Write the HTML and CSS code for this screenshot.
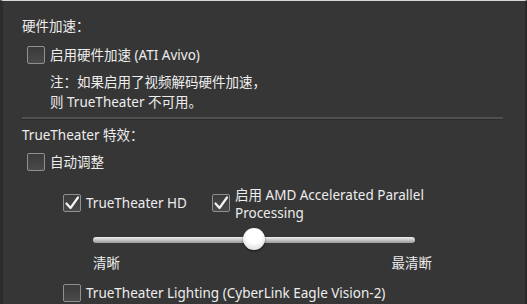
FILE: index.html
```html
<!DOCTYPE html>
<html>
<head>
<meta charset="utf-8">
<link rel="stylesheet" href="styles.css">
</head>
<body>
<div class="panel">
  <div class="title t1">硬件加速：</div>
  <div class="row r1"><span class="cb"></span><span class="lbl">启用硬件加速 (ATI Avivo)</span></div>
  <div class="note">注：如果启用了视频解码硬件加速，<br>则 TrueTheater 不可用。</div>
  <div class="sep"></div>
  <div class="title t2">TrueTheater 特效：</div>
  <div class="row r2"><span class="cb"></span><span class="lbl">自动调整</span></div>
  <div class="pair">
    <div class="row hd"><span class="cb on"><svg viewBox="0 0 18 18" width="18" height="18"><path d="M3.5 9.5 L7.5 14 L15 3.5" fill="none" stroke="#f4f4f4" stroke-width="2.2" stroke-linecap="round" stroke-linejoin="round"/></svg></span><span class="lbl">TrueTheater HD</span></div>
    <div class="row amd"><span class="cb on"><svg viewBox="0 0 18 18" width="18" height="18"><path d="M3.5 9.5 L7.5 14 L15 3.5" fill="none" stroke="#f4f4f4" stroke-width="2.2" stroke-linecap="round" stroke-linejoin="round"/></svg></span><span class="lbl two">启用 AMD Accelerated Parallel<br>Processing</span></div>
  </div>
  <div class="slider">
    <div class="track"></div>
    <div class="thumb"></div>
  </div>
  <div class="scale"><span>清晰</span><span>最清断</span></div>
  <div class="row r3"><span class="cb"></span><span class="lbl">TrueTheater Lighting (CyberLink Eagle Vision-2)</span></div>
</div>
</body>
</html>
```
FILE: styles.css
```css
html, body {
  margin: 0;
  padding: 0;
}
body {
  width: 527px;
  height: 304px;
  overflow: hidden;
  background: #363636;
  font-family: "Noto Sans", "Noto Sans CJK SC", sans-serif;
  font-size: 13.5px;
  color: #ededed;
}
.panel {
  box-sizing: border-box;
  height: 304px;
  border-top: 1px solid #d8d8d8;
  border-left: 3px solid #2c2c2c;
  border-right: 2px solid #2a2a2a;
  padding-left: 19px;
  display: flex;
  flex-direction: column;
  position: relative;
}
.title {
  line-height: 18px;
}
.t1 { margin-top: 16px; }
.t2 { margin-top: 6px; }
.row {
  display: flex;
  align-items: center;
  gap: 5px;
}
.r1 { margin-top: 11px; margin-left: 5px; }
.r2 { margin-top: 9px; margin-left: 5px; }
.cb {
  box-sizing: border-box;
  width: 18px;
  height: 18px;
  flex: none;
  border: 1.5px solid #909090;
  border-radius: 2px;
  background: linear-gradient(#3a3a3a, #4a4a4a);
  display: flex;
  align-items: center;
  justify-content: center;
}
.cb svg { display: block; margin: -1.5px; }
.lbl { line-height: 18px; }
.note {
  margin-top: 8px;
  margin-left: 28px;
  line-height: 20px;
}
.sep {
  margin-top: 5px;
  width: 481px;
  height: 2px;
  background: #505050;
  border-bottom: 1px solid #2c2c2c;
}
.pair {
  display: flex;
  margin-top: 23px;
  margin-left: 41px;
  align-items: flex-start;
}
.hd { width: 149px; }
.amd { align-items: flex-start; }
.two { line-height: 18px; margin-top: -8px; }
.slider {
  position: relative;
  margin-top: 6px;
  margin-left: 71px;
  width: 322px;
  height: 24px;
}
.track {
  position: absolute;
  left: 0;
  right: 0;
  top: 9px;
  height: 6px;
  border-radius: 3px;
  background: linear-gradient(#f0f0f0, #9a9a9a);
}
.thumb {
  position: absolute;
  left: 150px;
  top: 0;
  width: 22px;
  height: 22px;
  border-radius: 50%;
  background: radial-gradient(circle at 50% 35%, #ffffff 40%, #cfcfcf 100%);
  box-shadow: 0 1px 2px rgba(0,0,0,0.6);
}
.scale {
  display: flex;
  justify-content: space-between;
  margin-left: 71px;
  width: 339px;
  margin-top: 2px;
  line-height: 18px;
}
.r3 { margin-top: 12px; margin-left: 41px; }
```
